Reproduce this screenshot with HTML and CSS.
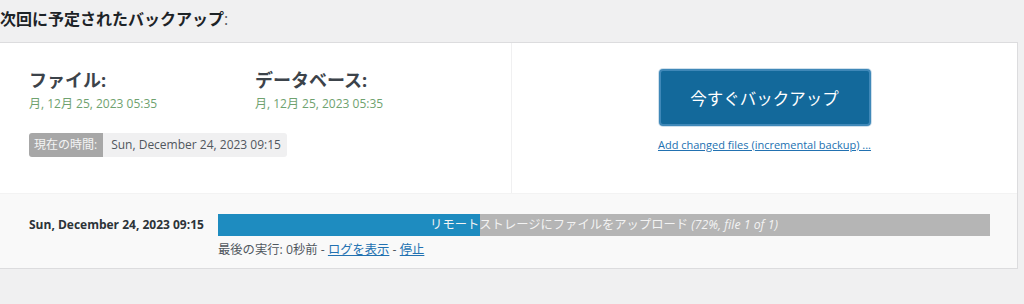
FILE: index.html
```html
<!DOCTYPE html>
<html lang="ja">
<head>
<meta charset="utf-8">
<link rel="stylesheet" href="styles.css">
</head>
<body>
<h2 class="title">次回に予定されたバックアップ<span class="colon">:</span></h2>
<div class="panel">
  <div class="top">
    <div class="left">
      <div class="sched">
        <div class="item">
          <h3>ファイル:</h3>
          <div class="date">月, 12月 25, 2023 05:35</div>
        </div>
        <div class="item">
          <h3>データベース:</h3>
          <div class="date">月, 12月 25, 2023 05:35</div>
        </div>
      </div>
      <div class="now"><span class="now-label">現在の時間:</span><span class="now-value">Sun, December 24, 2023 09:15</span></div>
    </div>
    <div class="right">
      <button class="backup-btn">今すぐバックアップ</button>
      <a class="incr" href="#">Add changed files (incremental backup) ...</a>
    </div>
  </div>
  <div class="bottom">
    <div class="job-time">Sun, December 24, 2023 09:15</div>
    <div class="job">
      <div class="bar">
        <div class="fill" style="width:34%"></div>
        <div class="bar-text">リモートストレージにファイルをアップロード <i>(72%, file 1 of 1)</i></div>
      </div>
      <div class="meta">最後の実行: 0秒前 - <a href="#">ログを表示</a> - <a href="#">停止</a></div>
    </div>
  </div>
</div>
</body>
</html>
```

FILE: styles.css
```css
html, body {
  margin: 0;
  padding: 0;
  background: #f0f0f1;
  font-family: "Open Sans", "Noto Sans CJK JP", sans-serif;
  color: #3c434a;
}
.title {
  margin: 0;
  height: 42px;
  box-sizing: border-box;
  padding-top: 7px;
  font-size: 16px;
  font-weight: 600;
  color: #1d2327;
  line-height: 24px;
}
.title .colon {
  font-weight: 400;
  color: #50575e;
}
.panel {
  width: 1019px;
  margin-left: -1px;
  background: #fff;
  border: 1px solid #dcdcde;
  box-sizing: border-box;
}
.top {
  display: grid;
  grid-template-columns: 511px 1fr;
  height: 150px;
}
.left {
  padding: 24px 0 0 29px;
}
.sched {
  display: flex;
}
.item {
  width: 226px;
}
.item h3 {
  margin: 0;
  font-size: 18px;
  line-height: 26px;
  font-weight: 700;
  color: #3c434a;
}
.date {
  margin-top: 2px;
  font-size: 12px;
  line-height: 18px;
  color: #6fa26f;
}
.now {
  display: inline-flex;
  margin-top: 20px;
  font-size: 12px;
  line-height: 24px;
  border-radius: 3px;
  overflow: hidden;
}
.now-label {
  background: #a7a7a7;
  color: #f4f4f4;
  padding: 0 6px 0 5px;
}
.now-value {
  background: #f0f0f1;
  color: #50575e;
  padding: 0 6px 0 8px;
}
.right {
  border-left: 1px solid #f0f0f1;
  display: flex;
  flex-direction: column;
  align-items: center;
  padding-top: 26px;
}
.backup-btn {
  width: 212px;
  height: 57px;
  background: #13699b;
  border: 2px solid #3f88b8;
  border-radius: 4px;
  box-shadow: 0 0 0 1px #cfe0ec;
  color: #fff;
  font-family: inherit;
  font-size: 16.5px;
  cursor: pointer;
}
.incr {
  margin-top: 10px;
  font-size: 11px;
  line-height: 18px;
  color: #2271b1;
  text-decoration: underline;
}
.bottom {
  height: 75px;
  background: #f9f9f9;
  border-top: 1px solid #f3f3f3;
  box-sizing: border-box;
  display: flex;
  padding: 20px 27px 0 29px;
}
.job-time {
  width: 189px;
  font-size: 12px;
  font-weight: 700;
  color: #2c3338;
  line-height: 22px;
}
.job {
  flex: 1;
}
.bar {
  position: relative;
  height: 22px;
  background: #b5b5b5;
}
.fill {
  height: 100%;
  background: #1e8cc0;
}
.bar-text {
  position: absolute;
  inset: 0;
  text-align: center;
  color: #f3f3f3;
  font-size: 12.3px;
  line-height: 22px;
}
.bar-text i {
  font-style: italic;
}
.meta {
  margin-top: 4px;
  font-size: 12.3px;
  line-height: 20px;
  color: #50575e;
}
.meta a {
  color: #2271b1;
  text-decoration: underline;
}
```
